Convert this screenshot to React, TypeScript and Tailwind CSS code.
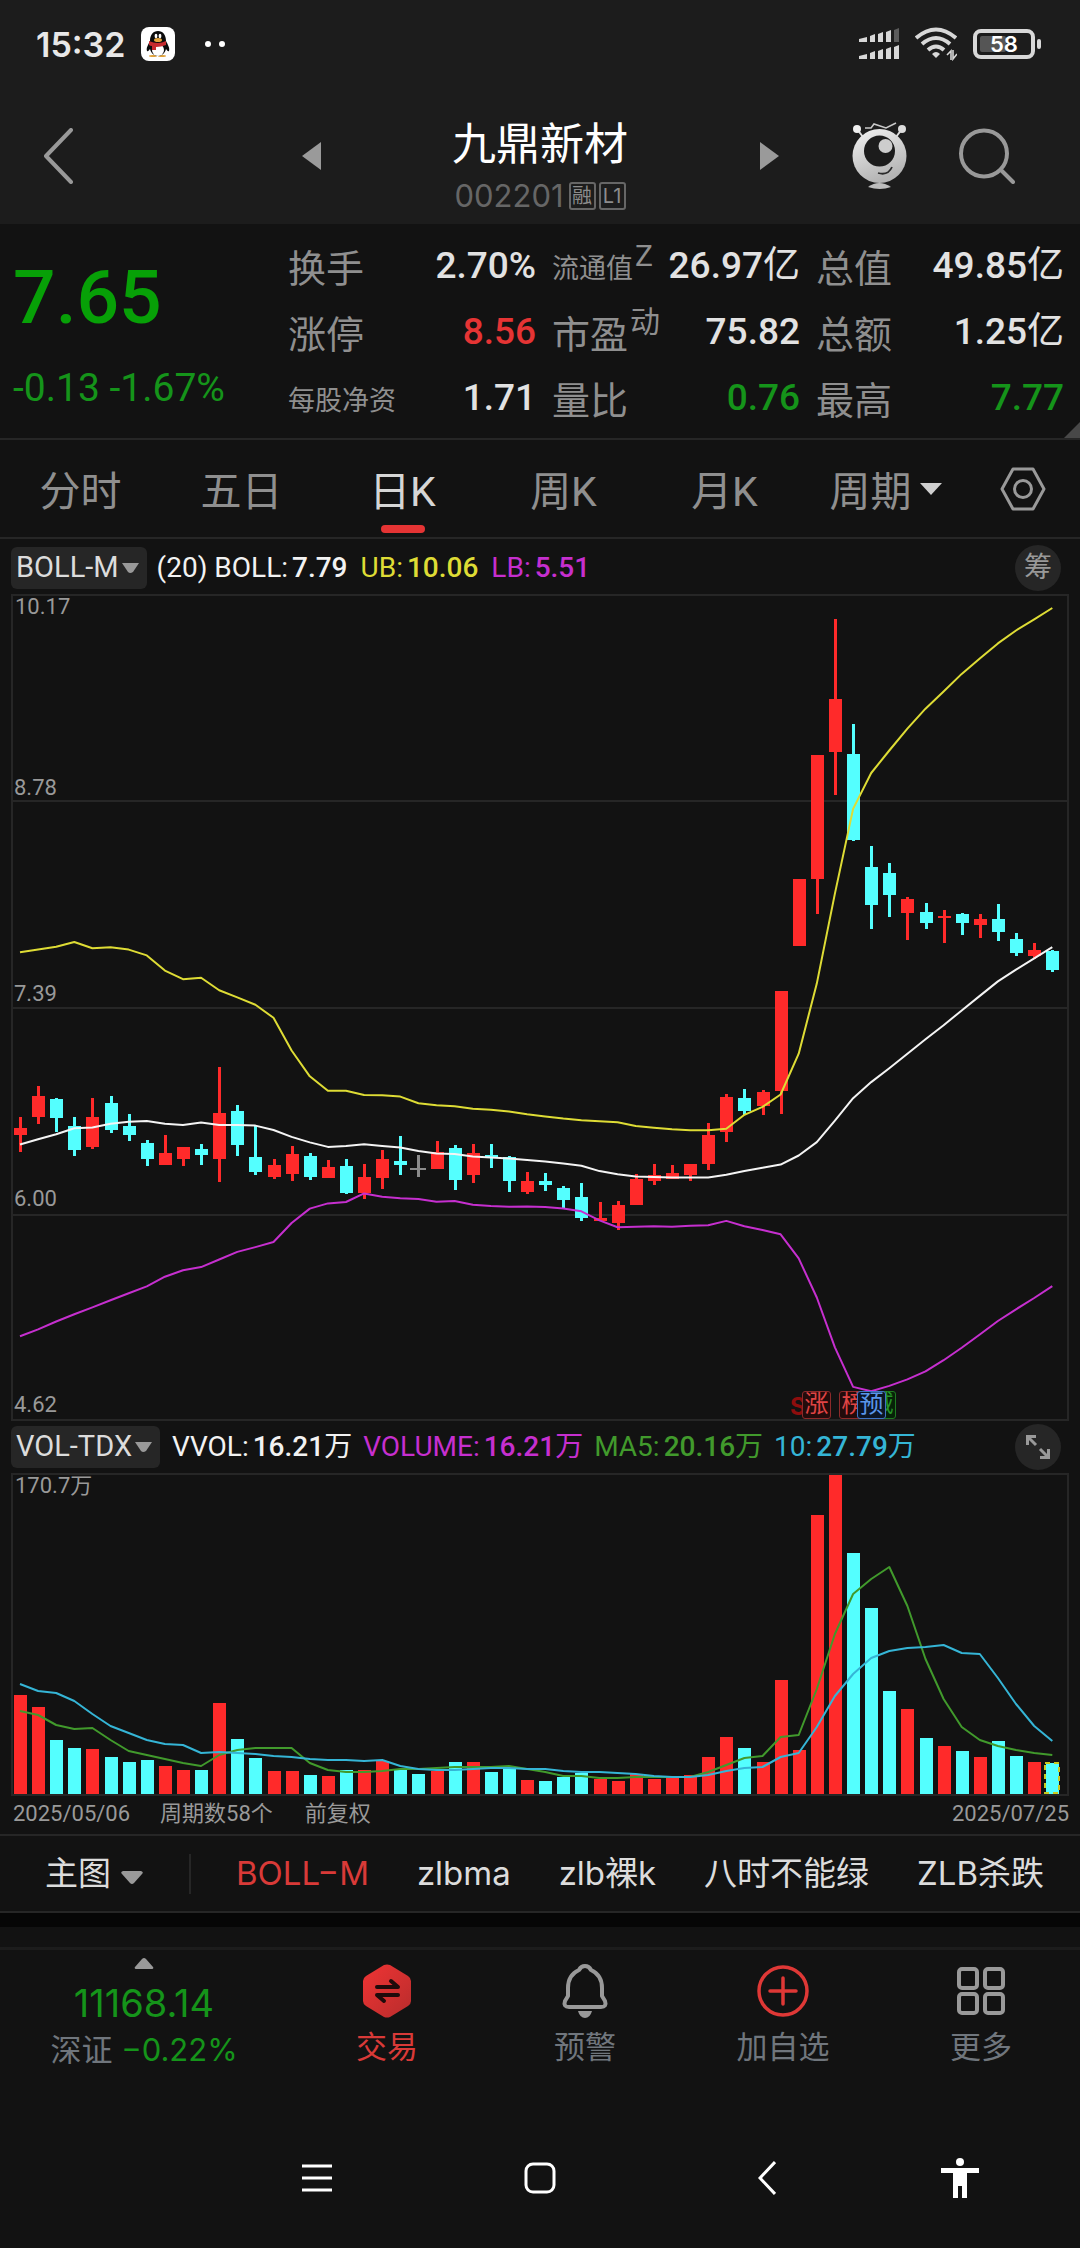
import React from "react";

const STEP = 18.11;
const FIRST_X = 9;
const RED = "#ff2a2a";
const CYAN = "#54ffff";
const GRAY = "#8c8c8c";

type Kind = "up" | "down" | "flat";
type Candle = [Kind, number, number, number, number];

const kindColor: Record<Kind, string> = { up: RED, down: CYAN, flat: GRAY };

// [direction, body top, body bottom, high, low]
const candles: Candle[] = [
  ["up", 534, 541, 523, 558], ["up", 502, 523, 492, 530], ["down", 505, 524, 504, 538],
  ["down", 532, 556, 523, 562], ["up", 523, 553, 504, 555], ["down", 509, 536, 502, 539],
  ["down", 532, 541, 520, 547], ["down", 549, 565, 546, 572], ["up", 559, 571, 541, 571],
  ["up", 553, 565, 553, 572], ["down", 555, 561, 550, 571], ["up", 519, 565, 473, 588],
  ["down", 517, 551, 511, 562], ["down", 563, 578, 531, 581], ["up", 571, 583, 565, 585],
  ["up", 560, 580, 552, 587], ["down", 562, 583, 559, 586], ["up", 573, 584, 566, 584],
  ["down", 572, 599, 565, 600], ["up", 583, 599, 570, 605], ["up", 565, 584, 556, 595],
  ["down", 567, 571, 542, 581], ["flat", 574, 576, 561, 583], ["up", 558, 575, 547, 575],
  ["down", 554, 586, 551, 596], ["up", 559, 581, 550, 589], ["down", 561, 564, 550, 574],
  ["down", 563, 587, 562, 598], ["up", 587, 598, 578, 600], ["down", 587, 591, 579, 597],
  ["down", 594, 606, 592, 614], ["down", 603, 624, 589, 627], ["up", 624, 627, 608, 627],
  ["up", 611, 629, 607, 636], ["up", 585, 611, 580, 611], ["up", 581, 587, 570, 591],
  ["up", 579, 585, 571, 585], ["up", 570, 581, 570, 587], ["up", 541, 570, 529, 576],
  ["up", 503, 538, 500, 548], ["down", 504, 517, 495, 521], ["up", 498, 512, 496, 521],
  ["up", 397, 497, 397, 520], ["up", 285, 352, 285, 352], ["up", 161, 285, 161, 320],
  ["up", 105, 158, 25, 201], ["down", 160, 246, 130, 247], ["down", 273, 311, 252, 335],
  ["down", 279, 301, 269, 323], ["up", 305, 319, 303, 346], ["down", 318, 329, 309, 335],
  ["up", 322, 324, 316, 349], ["down", 320, 329, 319, 341], ["up", 325, 331, 320, 344],
  ["down", 325, 338, 310, 347], ["down", 345, 359, 339, 362], ["up", 356, 362, 349, 365],
  ["down", 357, 376, 356, 378],
];

const upperBand = [
  358.3, 355.6, 352.8, 348, 354.2, 353.2, 355.6, 361.4, 376.6, 385.2, 383.8, 396.2, 403.4, 410.7, 423.8,
  456.5, 482.3, 496.8, 496.8, 500.9, 501.3, 502.6, 509.2, 511.2, 512.3, 514.7, 515.7, 517.4, 520.2, 522.4,
  524.6, 526.2, 527.2, 528.3, 532.1, 533.7, 535.3, 536.3, 536.3, 534.7, 520.8, 512.8, 500.5, 459.7, 389.6,
  299.6, 214.9, 179, 156.5, 134.6, 114.7, 97.6, 79.9, 64.4, 49.4, 36.5, 25.3, 14,
];

const middleBand = [
  550.5, 545.3, 540.2, 534.3, 533.6, 529.8, 527.8, 527.1, 529.8, 530.9, 528.5, 530.9, 530.9, 531.6, 536,
  542.9, 548.4, 552.9, 551.9, 550.2, 551.9, 553.6, 557, 559.4, 560.1, 562.6, 563.6, 564.6, 566, 567.4,
  569.6, 571.7, 577.1, 580.3, 582.4, 582.9, 583.5, 583.5, 583.5, 580.8, 577.1, 573.8, 570.6, 561.5, 548.1,
  526.7, 504.2, 488.1, 474.2, 459.7, 445.3, 431.3, 416.4, 401.9, 387.4, 375.6, 364.4, 353.1,
];

const lowerBand = [
  742.3, 735.4, 727.5, 720.3, 713.4, 706.2, 699.3, 692.4, 682.7, 676.2, 673.1, 665.5, 657.9, 653.1, 648,
  629, 614.6, 609.4, 608, 599.4, 602.8, 604.2, 604.9, 607.7, 607, 610.8, 612.1, 612.8, 612.5, 613,
  614.6, 617.3, 626.4, 633.3, 632.8, 632.2, 632.8, 631.7, 631.2, 626.9, 632.2, 636, 640.3, 664.4, 703.5,
  753.3, 792.9, 797.2, 791.9, 785.4, 777.4, 766.2, 753.8, 740.5, 727, 715.3, 704, 692.2,
];

const volumes = [
  99, 87, 54, 46, 45, 37, 32, 34, 28, 24, 24, 91, 55, 36, 23, 23, 19, 18, 24, 24, 33, 25, 20, 23, 32, 32, 22, 25,
  14, 13, 17, 21, 15, 13, 20, 15, 16, 19, 37, 57, 46, 32, 114, 44, 279, 321, 241, 186, 103, 85, 56, 48, 43, 37,
  53, 38, 32, 31,
];

const volumeMa5 = [
  238, 242, 252, 256, 255, 267, 278, 282, 286, 290, 293, 282, 277, 275, 275, 275, 290, 297, 299, 299, 298, 296,
  296, 295, 294, 294, 294, 293, 296, 299, 303, 303, 305, 305, 304, 304, 304, 304, 299, 292, 285, 283, 264, 262,
  216, 161, 121, 106, 94, 133, 186, 226, 254, 267, 273, 277, 280, 282,
];

const volumeMa10 = [
  211, 218, 220, 228, 241, 253, 260, 267, 271, 272, 280, 279, 280, 281, 283, 284, 286, 287, 287, 288, 287, 293,
  296, 297, 297, 296, 295, 295, 296, 296, 298, 299, 299, 300, 301, 303, 304, 304, 302, 298, 295, 294, 284, 280,
  254, 223, 201, 185, 178, 175, 174, 172, 180, 181, 205, 231, 253, 268,
];

const xAt = (i: number) => FIRST_X + i * STEP;
const toPoints = (values: number[]) => values.map((v, i) => `${xAt(i).toFixed(1)},${v}`).join(" ");

function Line({ values, color }: { values: number[]; color: string }) {
  return <polyline points={toPoints(values)} fill="none" stroke={color} strokeWidth="2" strokeLinejoin="round" />;
}

function PriceChart() {
  return (
    <svg viewBox="2 2 1054 823" className="block h-auto w-full" role="img" aria-label="日K">
      {[207, 414, 621].map((y) => (
        <line key={y} x1="0" x2="1056" y1={y} y2={y} stroke="#262626" strokeWidth="2" />
      ))}
      {candles.map(([kind, top, bottom, high, low], i) => {
        const x = Math.round(xAt(i));
        return (
          <g key={i} fill={kindColor[kind]}>
            <rect x={x - 1} y={high} width="3" height={low - high} />
            <rect x={x - (kind === "flat" ? 8 : 6)} y={top} width={kind === "flat" ? 16 : 13} height={bottom - top} />
          </g>
        );
      })}
      <Line values={upperBand} color="#dedc35" />
      <Line values={middleBand} color="#f4f4f4" />
      <Line values={lowerBand} color="#c62fcf" />
    </svg>
  );
}

function VolumeChart() {
  const last = volumes.length - 1;
  return (
    <svg viewBox="2 2 1054 319" className="block h-auto w-full" role="img" aria-label="VOL-TDX">
      {volumes.map((v, i) => (
        <rect
          key={i}
          x={Math.round(xAt(i)) - 6}
          y={321 - v}
          width="13"
          height={v}
          fill={candles[i][0] === "up" ? RED : CYAN}
        />
      ))}
      <rect
        x={Math.round(xAt(last)) - 7}
        y={321 - volumes[last]}
        width="14"
        height={volumes[last] - 1}
        fill="none"
        stroke="#c9c91e"
        strokeWidth="2"
        strokeDasharray="5 4"
      />
      <Line values={volumeMa5} color="#419a2c" />
      <Line values={volumeMa10} color="#35b5d6" />
    </svg>
  );
}

function StatusBar() {
  return (
    <div className="flex h-[88px] items-center justify-between pr-[39px] pl-9">
      <div className="flex items-center">
        <span className="text-[34px] font-semibold text-[#e8e8e8]">15:32</span>
        <svg viewBox="0 0 34 34" className="ml-4 size-[34px]" aria-label="QQ">
          <rect width="34" height="34" rx="8" fill="#fff" />
          <ellipse cx="12" cy="29" rx="4" ry="1" fill="#e0a23a" />
          <ellipse cx="21" cy="29" rx="4" ry="1" fill="#e0a23a" />
          <path d="M9 14C9 8 12 4 17 4s8 4 8 10c2 4 4 7 3 10-1 1-2-1-3-2-1 4-4 7-8 7s-7-3-8-7c-1 1-2 3-3 2-1-3 1-6 3-10Z" fill="#0b0b0b" />
          <ellipse cx="17" cy="23" rx="6" ry="6" fill="#fff" />
          <path d="M8 14q9 4 17 0v4q-5 2-10 2v3h-4v-4q-2 0-3-1Z" fill="#c62a2e" />
          <ellipse cx="17" cy="13" rx="4" ry="2" fill="#e3a33b" />
          <ellipse cx="15" cy="9" rx="1.4" ry="2.2" fill="#fff" />
          <ellipse cx="19" cy="9" rx="1.4" ry="2.2" fill="#fff" />
        </svg>
        <span className="ml-[30px] size-[6px] rounded-full bg-white" />
        <span className="ml-2 size-[6px] rounded-full bg-white" />
      </div>
      <div className="flex items-center">
        <svg viewBox="0 0 40 34" className="h-[34px] w-10" fill="#d8d8d8" aria-hidden="true">
          <path d="M0 12l8-2v5H0ZM11 9l5-2v8h-5ZM19 7l5-2v10h-5ZM27 5l5-2v12h-5Z" />
          <path d="M35 3l5-2v14h-5Z" fill="#5c5c5c" />
          <path d="M0 29l8-2v5H0ZM11 26l5-2v8h-5ZM19 24l5-2v10h-5ZM27 22l5-2v12h-5ZM35 20l5-2v14h-5Z" />
        </svg>
        <svg viewBox="0 0 42 34" className="ml-4 h-[34px] w-[42px]" fill="none" stroke="#d8d8d8" strokeWidth="4" aria-hidden="true">
          <path d="M1 11q20-17 40 0M7 17q14-12 28 0M13 23q8-7 16 0" />
          <path d="M17 27q4-4 8 0l-4 4Z" fill="#d8d8d8" stroke="none" />
          <path d="M32 28l4-4v9M42 27l-4 5v-9" strokeWidth="1.6" />
        </svg>
        <div className="relative ml-4 flex h-[30px] w-[62px] items-center justify-center rounded-[8px] border-4 border-[#d8d8d8]">
          <span className="absolute inset-y-[3px] left-[3px] w-[26px] rounded-[2px] bg-[#555]" />
          <span className="relative text-[22px] leading-none font-semibold text-white">58</span>
        </div>
        <span className="ml-[2px] h-[10px] w-1 rounded-full bg-[#d8d8d8]" />
      </div>
    </div>
  );
}

function Robot() {
  return (
    <svg viewBox="0 0 56 68" className="h-[68px] w-[56px]" aria-hidden="true">
      <defs>
        <linearGradient id="robotBody" x1="0" y1="0" x2="0.4" y2="1">
          <stop offset="0" stopColor="#f2f2f2" />
          <stop offset="1" stopColor="#b4b4b4" />
        </linearGradient>
      </defs>
      <path d="M5 7l6 8M50 7l-6 8" stroke="#dcdcdc" strokeWidth="2" />
      <circle cx="5" cy="7" r="4" fill="#efefef" />
      <circle cx="50" cy="7" r="4" fill="#dcdcdc" />
      <path d="M13 6h6l3-4 12 4 10-5" fill="none" stroke="#c8c8c8" strokeWidth="1.6" />
      <circle cx="27.500" cy="34" r="27" fill="url(#robotBody)" />
      <circle cx="27.500" cy="29" r="15.500" fill="#1c1c1c" />
      <circle cx="33.500" cy="24" r="7" fill="#cdcdcd" />
      <path d="M26 51q10 3 14-6" fill="none" stroke="#2a2a2a" strokeWidth="1.800" />
      <path d="M16 65q11-8 23 0-11 4-23 0Z" fill="#bdbdbd" />
    </svg>
  );
}

function Header() {
  return (
    <header className="bg-[#1c1c1c] font-[Inter,'Noto_Sans_CJK_SC',sans-serif]">
      <StatusBar />
      <div className="grid h-[136px] grid-cols-[1fr_477px_1fr] items-center">
        <button aria-label="返回" className="pl-[43px]">
          <svg viewBox="0 0 30 56" className="h-14 w-[30px]" fill="none" stroke="#999" strokeWidth="4" strokeLinecap="round" strokeLinejoin="round">
            <path d="M28 2L3 28l25 26" />
          </svg>
        </button>
        <div className="flex items-center justify-between">
          <button aria-label="上一只">
            <svg viewBox="0 0 19 28" className="h-7 w-[19px]"><path d="M0 14L19 0v28Z" fill="#9a9a9a" /></svg>
          </button>
          <div className="flex flex-col items-center pt-4">
            <h1 className="text-[44px] leading-[56px] text-white">九鼎新材</h1>
            <div className="mt-2 flex items-center gap-[3px] text-[#666]">
              <span className="mr-[2px] text-[31px] leading-8">002201</span>
              <span className="flex h-7 w-[27px] items-center justify-center rounded-[3px] border-2 border-[#666] text-[20px] text-[#8c8c8c]">融</span>
              <span className="flex h-7 w-[27px] items-center justify-center rounded-[3px] border-2 border-[#666] text-[20px] text-[#8c8c8c]">L1</span>
            </div>
          </div>
          <button aria-label="下一只">
            <svg viewBox="0 0 19 28" className="h-7 w-[19px]"><path d="M19 14L0 0v28Z" fill="#9a9a9a" /></svg>
          </button>
        </div>
        <div className="flex items-center justify-end gap-[51px] pr-[65px]">
          <button aria-label="智能助手"><Robot /></button>
          <button aria-label="搜索">
            <svg viewBox="0 0 56 56" className="size-14" fill="none" stroke="#999" strokeWidth="4" strokeLinecap="round">
              <circle cx="25" cy="25.500" r="23" />
              <path d="M43 43l11 11" />
            </svg>
          </button>
        </div>
      </div>
    </header>
  );
}

type Stat = { label: string; sup?: string; small?: boolean; value: string; unit?: string; color?: string };

const stats: Stat[] = [
  { label: "换手", value: "2.70%" },
  { label: "流通值", sup: "Z", small: true, value: "26.97", unit: "亿" },
  { label: "总值", value: "49.85", unit: "亿" },
  { label: "涨停", value: "8.56", color: "text-[#e53434]" },
  { label: "市盈", sup: "动", value: "75.82" },
  { label: "总额", value: "1.25", unit: "亿" },
  { label: "每股净资", small: true, value: "1.71" },
  { label: "量比", value: "0.76", color: "text-[#15941a]" },
  { label: "最高", value: "7.77", color: "text-[#15941a]" },
];

function Quote() {
  return (
    <section className="relative grid h-[216px] grid-cols-[288fr_792fr] border-b-2 border-[#262626]">
      <div className="flex flex-col pl-[13px] pt-[30px]">
        <span className="text-[75px] leading-[86px] font-medium text-[#07a007]">7.65</span>
        <span className="mt-[26px] text-[39px] leading-[44px] text-[#15941a]">-0.13 -1.67%</span>
      </div>
      <dl className="grid auto-rows-[66px] grid-cols-3 pt-[9px]">
        {stats.map((s) => (
          <div key={s.label} className="flex items-center justify-between pr-[16px] whitespace-nowrap">
            <dt className={s.small ? "flex items-center pt-[6px] text-[27px] text-[#8f8f8f]" : "flex items-center pt-[6px] text-[38px] text-[#8f8f8f]"}>
              {s.label}
              {s.sup && <span className="-mt-7 ml-[2px] text-[30px]">{s.sup}</span>}
            </dt>
            <dd className={`text-[37px] font-medium ${s.color ?? "text-[#e2e2e2]"}`}>
              {s.value}
              {s.unit && <span className="font-normal">{s.unit}</span>}
            </dd>
          </div>
        ))}
      </dl>
      <svg viewBox="0 0 16 16" className="absolute right-0 bottom-0 size-4" aria-hidden="true">
        <path d="M16 0v16H0Z" fill="#484848" />
      </svg>
    </section>
  );
}

const periods = ["分时", "五日", "日K", "周K", "月K"];

function PeriodTabs() {
  return (
    <nav className="grid h-[99px] grid-cols-[repeat(6,161fr)_114fr] border-b-2 border-[#262626] text-[41px] text-[#8f8f8f]">
      {periods.map((p) => (
        <button key={p} className={p === "日K" ? "relative pt-2 text-[#d6d6d6]" : "relative pt-2"}>
          {p}
          {p === "日K" && <span className="absolute bottom-1 left-1/2 h-2 w-11 -translate-x-1/2 rounded-full bg-[#e53434]" />}
        </button>
      ))}
      <button className="flex items-center justify-center gap-[8px] pt-2" aria-haspopup="menu">
        周期
        <svg viewBox="0 0 22 12" className="mb-2 h-3 w-[22px]" aria-hidden="true"><path d="M0 0h22L11 12Z" fill="#cfcfcf" /></svg>
      </button>
      <button aria-label="设置" className="flex items-center justify-center">
        <svg viewBox="0 0 46 44" className="h-11 w-[46px]" fill="none" stroke="#999" strokeWidth="3" strokeLinejoin="round">
          <path d="M13 2h20l11 20-11 20H13L2 22Z" />
          <circle cx="23" cy="22" r="8.500" />
        </svg>
      </button>
    </nav>
  );
}

function IndicatorButton({ name }: { name: string }) {
  return (
    <button aria-haspopup="menu" className="flex h-[42px] items-center gap-[3px] rounded-[6px] bg-[#262626] pr-2 pl-[5px] text-[29px] text-[#dcdcdc]">
      {name}
      <svg viewBox="0 0 17 10" className="h-[10px] w-[17px]" aria-hidden="true"><path d="M0 0h17l-6 9q-3 2-5 0Z" fill="#999" /></svg>
    </button>
  );
}

function Reading({ name, value, unit, color }: { name: string; value: string; unit?: string; color: string }) {
  return (
    <span className={`flex gap-1 ${color}`}>
      <span>{name}</span>
      <span className="font-medium">
        {value}
        {unit && <span className="font-normal">{unit}</span>}
      </span>
    </span>
  );
}

const gridLabels = [
  { text: "8.78", place: "bottom-3/4" },
  { text: "7.39", place: "bottom-1/2" },
  { text: "6.00", place: "bottom-1/4" },
  { text: "4.62", place: "bottom-0" },
];

function Charts() {
  return (
    <main className="px-[11px]">
      <div className="flex h-[55px] items-center pt-[2px] whitespace-nowrap text-[28px]">
        <IndicatorButton name="BOLL-M" />
        <div className="ml-[10px] flex gap-[13px]">
          <Reading name="(20) BOLL:" value="7.79" color="text-[#f2f2f2]" />
          <Reading name="UB:" value="10.06" color="text-[#dedc35]" />
          <Reading name="LB:" value="5.51" color="text-[#c62fcf]" />
        </div>
        <button className="mr-2 ml-auto flex size-[46px] items-center justify-center rounded-full bg-[#262626] text-[28px] text-[#999]">筹</button>
      </div>
      <div className="relative border-2 border-[#262626]">
        <PriceChart />
        <span className="absolute top-0 left-[2px] text-[22px] leading-[22px] text-[#999]">10.17</span>
        {gridLabels.map((g) => (
          <span key={g.text} className={`absolute left-[1px] pb-[2px] text-[22px] leading-6 text-[#999] ${g.place}`}>{g.text}</span>
        ))}
        <div className="absolute bottom-0 left-[777px] flex h-7 items-end text-[24px] leading-6">
          <span className="w-3 font-[Inter] font-bold text-[#8e0d0d]">S</span>
          <span className="relative h-7 w-[29px] rounded-[3px] border border-[#8c2a2a] bg-[#230b0b] text-center text-[#e04444]">涨</span>
          <span className="ml-2 h-7 w-[29px] rounded-[3px] border border-[#8c2a2a] bg-[#230b0b] text-center text-[#e04444]">榜</span>
          <span className="relative z-10 -ml-[11px] h-7 w-[29px] rounded-[3px] border border-[#3f73c4] bg-[#0b1526] text-center text-[#5a96ea]">预</span>
          <span className="-ml-[19px] h-7 w-[29px] rounded-[3px] border border-[#1f7a22] bg-[#062208] text-center text-[#27952a]">减</span>
        </div>
      </div>
      <div className="flex h-[52px] items-center whitespace-nowrap text-[28px]">
        <IndicatorButton name="VOL-TDX" />
        <div className="ml-3 flex gap-[11px]">
          <Reading name="VVOL:" value="16.21" unit="万" color="text-[#f2f2f2]" />
          <Reading name="VOLUME:" value="16.21" unit="万" color="text-[#c62fcf]" />
          <Reading name="MA5:" value="20.16" unit="万" color="text-[#419a2c]" />
          <Reading name="10:" value="27.79" unit="万" color="text-[#35b5d6]" />
        </div>
        <button aria-label="展开" className="mr-2 ml-auto flex size-[46px] items-center justify-center rounded-full bg-[#262626]">
          <svg viewBox="0 0 24 24" className="size-6" fill="none" stroke="#999" strokeWidth="3">
            <path d="M10 1.500H1.500V10M2 2l8 8M14 22.500h8.500V14M22 22l-8-8" />
          </svg>
        </button>
      </div>
      <div className="relative border-2 border-[#262626]">
        <VolumeChart />
        <span className="absolute top-0 left-[2px] text-[22px] leading-[22px] text-[#999]">170.7万</span>
      </div>
      <div className="flex h-[38px] items-center pb-1 pl-[2px] text-[22px] text-[#999]">
        <span>2025/05/06</span>
        <span className="ml-[30px]">周期数58个</span>
        <span className="ml-8">前复权</span>
        <span className="ml-auto">2025/07/25</span>
      </div>
    </main>
  );
}

function IndicatorTabs() {
  return (
    <div className="flex h-[79px] items-center border-y-2 border-[#262626] pl-[45px] font-[Inter,'Noto_Sans_CJK_SC',sans-serif] text-[33px] whitespace-nowrap text-[#dcdcdc]">
      <button className="flex items-center gap-[10px]" aria-haspopup="menu">
        主图
        <svg viewBox="0 0 22 13" className="mt-2 h-[13px] w-[22px]" aria-hidden="true"><path d="M2 0h18q3 1 1 3l-8 9q-2 2-4 0L1 3q-2-2 1-3Z" fill="#999" /></svg>
      </button>
      <span className="ml-[46px] h-10 w-[2px] bg-[#262626]" />
      <div className="flex flex-1 justify-between pr-[36px] pl-[45px]">
        <button className="text-[#d93a38]">BOLL−M</button>
        <button>zlbma</button>
        <button>zlb裸k</button>
        <button>八时不能绿</button>
        <button>ZLB杀跌</button>
      </div>
    </div>
  );
}

const actions = [
  {
    label: "交易",
    color: "text-[#d93a38]",
    icon: (
      <svg viewBox="0 0 54 54" className="size-[54px]" aria-hidden="true">
        <defs>
          <linearGradient id="tradeFill" x1="0" y1="0" x2="1" y2="1">
            <stop offset="0" stopColor="#f03434" />
            <stop offset="1" stopColor="#b82c2c" />
          </linearGradient>
        </defs>
        <path d="M24 1q3-1 6 0l18 11q3 2 3 5v20q0 3-3 5L30 53q-3 1-6 0L6 42q-3-2-3-5V17q0-3 3-5Z" fill="url(#tradeFill)" />
        <path d="M17 23h21l-7-6M38 31H17l7 6" fill="none" stroke="#1f0b0b" strokeWidth="4" strokeLinecap="round" strokeLinejoin="round" />
      </svg>
    ),
  },
  {
    label: "预警",
    color: "text-[#70767d]",
    icon: (
      <svg viewBox="0 0 54 54" className="size-[54px]" aria-hidden="true">
        <path d="M27 2q4 0 6 4 11 5 11 18v8l3 5q2 6-4 6H11q-6 0-4-6l3-5v-8Q10 11 21 6q2-4 6-4Z" fill="none" stroke="#999" strokeWidth="4" strokeLinejoin="round" />
        <path d="M20 47h14q-2 7-7 7t-7-7Z" fill="#999" />
      </svg>
    ),
  },
  {
    label: "加自选",
    color: "text-[#70767d]",
    icon: (
      <svg viewBox="0 0 54 54" className="size-[54px]" fill="none" stroke="#df3836" aria-hidden="true">
        <circle cx="27" cy="27" r="24" strokeWidth="3.500" />
        <path d="M27 14v26M14 27h26" strokeWidth="3.500" strokeLinecap="round" />
      </svg>
    ),
  },
  {
    label: "更多",
    color: "text-[#70767d]",
    icon: (
      <svg viewBox="0 0 54 54" className="size-[54px]" fill="none" stroke="#999" strokeWidth="4" aria-hidden="true">
        <rect x="5" y="5" width="18" height="19" rx="3" />
        <rect x="31" y="5" width="18" height="19" rx="3" />
        <rect x="5" y="30" width="18" height="19" rx="3" />
        <rect x="31" y="30" width="18" height="19" rx="3" />
      </svg>
    ),
  },
];

function ActionBar() {
  return (
    <footer className="grid h-[161px] grid-cols-[288fr_repeat(4,198fr)] border-t-[3px] border-[#1c1c1c] font-[Inter,'Noto_Sans_CJK_SC',sans-serif] text-[31px]">
      <button className="flex flex-col items-center pt-2">
        <svg viewBox="0 0 20 11" className="h-[11px] w-5" aria-hidden="true"><path d="M8 1q2-2 4 0l7 8q1 2-1 2H2q-2 0-1-2Z" fill="#999" /></svg>
        <span className="mt-3 text-[38px] leading-[44px] text-[#15941a]">11168.14</span>
        <span className="mt-[2px] leading-[46px] whitespace-nowrap text-[#70767d]">
          深证 <span className="text-[#15941a]">−0.22%</span>
        </span>
      </button>
      {actions.map((a) => (
        <button key={a.label} className={`flex flex-col items-center pt-[14px] ${a.color}`}>
          {a.icon}
          <span className="mt-[7px] leading-[44px]">{a.label}</span>
        </button>
      ))}
    </footer>
  );
}

function SystemNav() {
  return (
    <nav className="grid h-[140px] grid-cols-[222fr_224fr_230fr_156fr] items-center justify-items-center pr-[42px] pl-[206px]">
      <button aria-label="最近任务">
        <svg viewBox="0 0 30 30" className="size-[30px]" stroke="#fff" strokeWidth="3"><path d="M0 3h30M0 15h30M0 27h30" /></svg>
      </button>
      <button aria-label="主屏幕">
        <svg viewBox="0 0 32 32" className="size-8" fill="none" stroke="#fff" strokeWidth="3"><rect x="2" y="2" width="28" height="28" rx="7" /></svg>
      </button>
      <button aria-label="后退">
        <svg viewBox="0 0 18 34" className="h-[34px] w-[18px]" fill="none" stroke="#fff" strokeWidth="3"><path d="M17 1L2 17l15 16" /></svg>
      </button>
      <button aria-label="无障碍">
        <svg viewBox="0 0 38 40" className="h-10 w-[38px]" fill="#fff">
          <circle cx="19" cy="4" r="4" />
          <path d="M0 10h38v5H26v25h-5V28h-4v12h-5V15H0Z" />
        </svg>
      </button>
    </nav>
  );
}

export default function App() {
  return (
    <div className="min-h-screen bg-[#121212] font-[Roboto,'Noto_Sans_CJK_SC',sans-serif]">
      <Header />
      <Quote />
      <PeriodTabs />
      <Charts />
      <IndicatorTabs />
      <div className="h-[14px] bg-[#060606]" />
      <div className="h-5" />
      <ActionBar />
      <SystemNav />
    </div>
  );
}
